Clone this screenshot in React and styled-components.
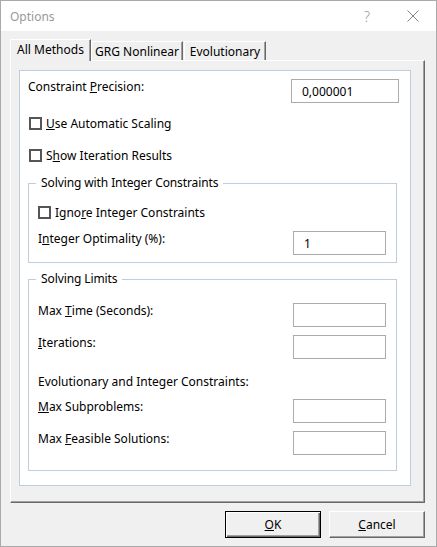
import React from 'react';
import styled, { createGlobalStyle, css } from 'styled-components';

const GlobalStyle = createGlobalStyle`
  html, body {
    margin: 0;
    padding: 0;
    background: #ffffff;
  }
  body {
    font-family: 'Segoe UI', 'Noto Sans', 'Open Sans', sans-serif;
    font-size: 12px;
    color: #000000;
  }
`;

const Window = styled.div`
  width: 437px;
  height: 547px;
  box-sizing: border-box;
  border: 1px solid #aaaaaa;
  background: #f0f0f0;
  display: flex;
  flex-direction: column;
`;

const TitleBar = styled.div`
  height: 30px;
  flex: none;
  background: #ffffff;
  display: flex;
  align-items: center;
  padding-left: 9px;
`;

const Title = styled.span`
  flex: 1;
  color: #999999;
  font-size: 12px;
`;

const TitleButton = styled.div`
  width: 46px;
  height: 30px;
  display: flex;
  align-items: center;
  justify-content: center;
  color: #9a9a9a;
  font-size: 14px;
  font-weight: 300;
`;

const Body = styled.div`
  flex: 1;
  min-height: 0;
  display: flex;
  flex-direction: column;
  padding: 8px 11px 8px 9px;
`;

const TabStrip = styled.div`
  height: 21px;
  flex: none;
  display: flex;
  align-items: flex-end;
  position: relative;
  z-index: 1;
`;

const Tab = styled.div`
  box-sizing: border-box;
  width: ${(p) => p.$w}px;
  height: 19px;
  margin-left: ${(p) => p.$ml || 0}px;
  background: #f0f0f0;
  border-top: 1px solid #ffffff;
  border-left: 1px solid #ffffff;
  border-right: 1px solid #696969;
  box-shadow: inset -1px 0 #a0a0a0;
  display: flex;
  align-items: center;
  justify-content: center;
  white-space: nowrap;

  ${(p) =>
    p.$active &&
    css`
      height: 22px;
      margin-bottom: -1px;
      padding-bottom: 2px;
    `}
`;

const Panel = styled.div`
  flex: 1;
  min-height: 0;
  display: flex;
  flex-direction: column;
  border-top: 1px solid #ffffff;
  border-left: 1px solid #ffffff;
  border-right: 1px solid #696969;
  border-bottom: 1px solid #696969;
  box-shadow: inset -1px -1px #a0a0a0;
  padding: 9px 13px 16px 8px;
`;

const Sheet = styled.div`
  flex: 1;
  background: #ffffff;
  border: 1px solid #c0cedc;
  padding: 8px 11px 0 8px;
  display: flex;
  flex-direction: column;
`;

const FieldRow = styled.div`
  display: flex;
  justify-content: space-between;
  align-items: flex-start;
  margin-top: ${(p) => p.$mt || 0}px;
`;

const Label = styled.span`
  line-height: 16px;
  white-space: nowrap;
`;

const Note = styled.div`
  line-height: 16px;
  margin-top: ${(p) => p.$mt || 0}px;
`;

const TextBox = styled.input`
  width: ${(p) => p.$w}px;
  height: 24px;
  box-sizing: border-box;
  border: 1px solid #ababab;
  background: #ffffff;
  padding: 0 0 0 10px;
  margin: 0;
  font: inherit;
  color: #000000;
  outline: none;
`;

const CheckRow = styled.label`
  display: flex;
  align-items: center;
  height: 16px;
  margin-top: ${(p) => p.$mt || 0}px;
  margin-left: ${(p) => p.$ml || 0}px;
  white-space: nowrap;
`;

const CheckBox = styled.span`
  width: 13px;
  height: 13px;
  box-sizing: border-box;
  border: 2px solid #555555;
  background: #ffffff;
  margin-right: 4px;
  flex: none;
`;

const Group = styled.fieldset`
  margin: ${(p) => p.$mt}px 2px 0 0;
  padding: 0 10px ${(p) => p.$pb}px 9px;
  border: 1px solid #c0cedc;
  min-width: 0;
`;

const Legend = styled.legend`
  padding: 0 5px;
  margin-left: -2px;
  line-height: 16px;
  letter-spacing: -0.1px;
`;

const ButtonRow = styled.div`
  flex: none;
  display: flex;
  justify-content: flex-end;
  gap: 8px;
  margin-top: 8px;
  height: 27px;
`;

const Button = styled.button`
  width: 96px;
  height: 27px;
  box-sizing: border-box;
  padding: 0;
  font: inherit;
  color: #000000;
  background: #f0f0f0;
  border: 1px solid;
  border-color: #ffffff #696969 #696969 #ffffff;
  box-shadow: inset -1px -1px #a0a0a0;

  ${(p) =>
    p.$default &&
    css`
      border-color: #000000;
      box-shadow: inset 1px 1px #ffffff, inset -1px -1px #696969, inset -2px -2px #a0a0a0;
    `}
`;

const CloseIcon = () => (
  <svg width="12" height="12" viewBox="0 0 12 12">
    <path d="M0.5 0.5 L11.5 11.5 M11.5 0.5 L0.5 11.5" stroke="#808080" strokeWidth="1" fill="none" />
  </svg>
);

const Check = ({ children, mt, ml }) => (
  <CheckRow $mt={mt} $ml={ml}>
    <CheckBox />
    <span>{children}</span>
  </CheckRow>
);

const App = () => (
  <>
    <GlobalStyle />
    <Window>
      <TitleBar>
        <Title>Options</Title>
        <TitleButton>?</TitleButton>
        <TitleButton>
          <CloseIcon />
        </TitleButton>
      </TitleBar>
      <Body>
        <TabStrip>
          <Tab $w={81} $active>All Methods</Tab>
          <Tab $w={92}>GRG Nonlinear</Tab>
          <Tab $w={82} $ml={1}>Evolutionary</Tab>
        </TabStrip>
        <Panel>
          <Sheet>
            <FieldRow>
              <Label>
                Constraint <u>P</u>recision:
              </Label>
              <TextBox $w={108} defaultValue="0,000001" />
            </FieldRow>
            <Check mt={12} ml={1}>
              <u>U</u>se Automatic Scaling
            </Check>
            <Check mt={16} ml={1}>
              S<u>h</u>ow Iteration Results
            </Check>

            <Group $mt={12} $pb={7}>
              <Legend>Solving with Integer Constraints</Legend>
              <Check mt={13}>
                Igno<u>r</u>e Integer Constraints
              </Check>
              <FieldRow $mt={11}>
                <Label>
                  I<u>n</u>teger Optimality (%):
                </Label>
                <TextBox $w={93} defaultValue="1" />
              </FieldRow>
            </Group>

            <Group $mt={8} $pb={15}>
              <Legend>Solving Limits</Legend>
              <FieldRow $mt={16}>
                <Label>
                  Max <u>T</u>ime (Seconds):
                </Label>
                <TextBox $w={93} defaultValue="" />
              </FieldRow>
              <FieldRow $mt={8}>
                <Label>
                  <u>I</u>terations:
                </Label>
                <TextBox $w={93} defaultValue="" />
              </FieldRow>
              <Note $mt={15}>Evolutionary and Integer Constraints:</Note>
              <FieldRow $mt={9}>
                <Label>
                  <u>M</u>ax Subproblems:
                </Label>
                <TextBox $w={93} defaultValue="" />
              </FieldRow>
              <FieldRow $mt={8}>
                <Label>
                  Max <u>F</u>easible Solutions:
                </Label>
                <TextBox $w={93} defaultValue="" />
              </FieldRow>
            </Group>
          </Sheet>
        </Panel>
        <ButtonRow>
          <Button $default>
            <u>O</u>K
          </Button>
          <Button>
            <u>C</u>ancel
          </Button>
        </ButtonRow>
      </Body>
    </Window>
  </>
);

export default App;
